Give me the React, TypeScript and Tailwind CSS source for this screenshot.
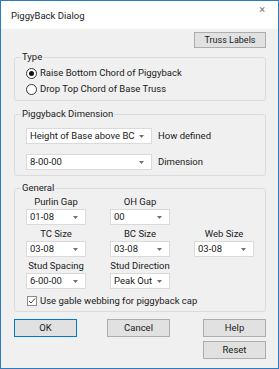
import React from "react";

const font = { fontFamily: "Roboto, 'Liberation Sans', sans-serif" };

function Caret() {
  return (
    <svg width="5" height="3" viewBox="0 0 5 3" className="shrink-0">
      <path d="M0 0 L5 0 L2.5 3 Z" fill="#707070" />
    </svg>
  );
}

function Select({ value, w }: { value: string; w: string }) {
  return (
    <div
      className={`${w} h-[16px] bg-white border border-[#dadada] flex items-center justify-between pl-[3px] pr-[7px]`}
    >
      <span className="leading-none whitespace-nowrap">{value}</span>
      <Caret />
    </div>
  );
}

function Radio({ checked, label }: { checked?: boolean; label: string }) {
  return (
    <div className="h-[16px] flex items-center">
      <div className="w-[11px] h-[11px] rounded-full border border-[#333] bg-white flex items-center justify-center">
        {checked && <div className="w-[5px] h-[5px] rounded-full bg-[#111]" />}
      </div>
      <span className="ml-[3px] leading-none whitespace-nowrap">{label}</span>
    </div>
  );
}

function Btn({ label, def, cls }: { label: string; def?: boolean; cls?: string }) {
  return (
    <div
      className={`w-[63px] h-[18px] flex items-center justify-center bg-[#e1e1e1] border ${
        def ? "border-[#0078d7]" : "border-[#adadad]"
      } ${cls ?? ""}`}
    >
      <span className="leading-none">{label}</span>
    </div>
  );
}

function Cell({ label, value }: { label: string; value: string }) {
  return (
    <div className="flex flex-col">
      <div className="h-[14px] flex items-center justify-center whitespace-nowrap">{label}</div>
      <Select value={value} w="w-[60px]" />
    </div>
  );
}

export default function App() {
  return (
    <div
      style={font}
      className="w-[279px] h-[369px] border border-[#2b7bc4] bg-[#f0f0f0] flex flex-col text-[9.5px] text-[#1a1a1a] overflow-hidden"
    >
      <div className="h-[28px] bg-white flex justify-between pl-[10px] pr-[13px]">
        <span className="mt-[10px] text-[9.5px] leading-none">PiggyBack Dialog</span>
        <span className="mt-[3px] text-[11px] text-[#777] leading-none">×</span>
      </div>
      <div className="flex-1 flex flex-col pl-[13px] pr-[12px] pt-[3px]">
        <div className="self-end w-[72px] h-[16px] bg-[#e1e1e1] border border-[#adadad] flex items-center justify-center">
          <span className="leading-none text-[9px]">Truss Labels</span>
        </div>

        <fieldset className="mt-[2px] border border-[#dcdcdc] rounded-[3px] p-0 m-0">
          <legend className="ml-[6px] px-[1px] h-[14px] leading-[14px]">Type</legend>
          <div className="pl-[11px] pt-[1px] pb-[3px]">
            <Radio checked label="Raise Bottom Chord of Piggyback" />
            <Radio label="Drop Top Chord of Base Truss" />
          </div>
        </fieldset>

        <fieldset className="mt-[6px] border border-[#dcdcdc] rounded-[3px] p-0 m-0">
          <legend className="ml-[6px] px-[1px] h-[14px] leading-[14px]">Piggyback Dimension</legend>
          <div className="pl-[11px] pt-[7px] pb-[5px] flex flex-col gap-[10px]">
            <div className="flex items-center gap-[6px]">
              <Select value="Height of Base above BC" w="w-[126px]" />
              <span className="leading-none">How defined</span>
            </div>
            <div className="flex items-center gap-[6px]">
              <Select value="8-00-00" w="w-[126px]" />
              <span className="leading-none">Dimension</span>
            </div>
          </div>
        </fieldset>

        <fieldset className="mt-[5px] border border-[#dcdcdc] rounded-[3px] p-0 m-0">
          <legend className="ml-[6px] px-[1px] h-[14px] leading-[14px]">General</legend>
          <div className="pl-[11px] pb-[3px]">
            <div className="grid grid-cols-[60px_60px_60px] gap-x-[24px] gap-y-[2px]">
              <Cell label="Purlin Gap" value="01-08" />
              <Cell label="OH Gap" value="00" />
              <div />
              <Cell label="TC Size" value="03-08" />
              <Cell label="BC Size" value="03-08" />
              <Cell label="Web Size" value="03-08" />
              <Cell label="Stud Spacing" value="6-00-00" />
              <Cell label="Stud Direction" value="Peak Out" />
              <div />
            </div>
            <div className="mt-[5px] h-[14px] flex items-center pl-[1px]">
              <div className="w-[10px] h-[10px] border border-[#8a8a8a] bg-white flex items-center justify-center">
                <svg width="8" height="8" viewBox="0 0 8 8">
                  <path d="M1 4 L3 6 L7 1.5" fill="none" stroke="#444" strokeWidth="1" />
                </svg>
              </div>
              <span className="ml-[3px] leading-none whitespace-nowrap">Use gable webbing for piggyback cap</span>
            </div>
          </div>
        </fieldset>

        <div className="mt-[7px] flex">
          <Btn label="OK" def />
          <Btn label="Cancel" cls="ml-[30px]" />
          <Btn label="Help" cls="ml-auto" />
        </div>
        <div className="mt-[4px] flex justify-end">
          <Btn label="Reset" />
        </div>
      </div>
    </div>
  );
}
